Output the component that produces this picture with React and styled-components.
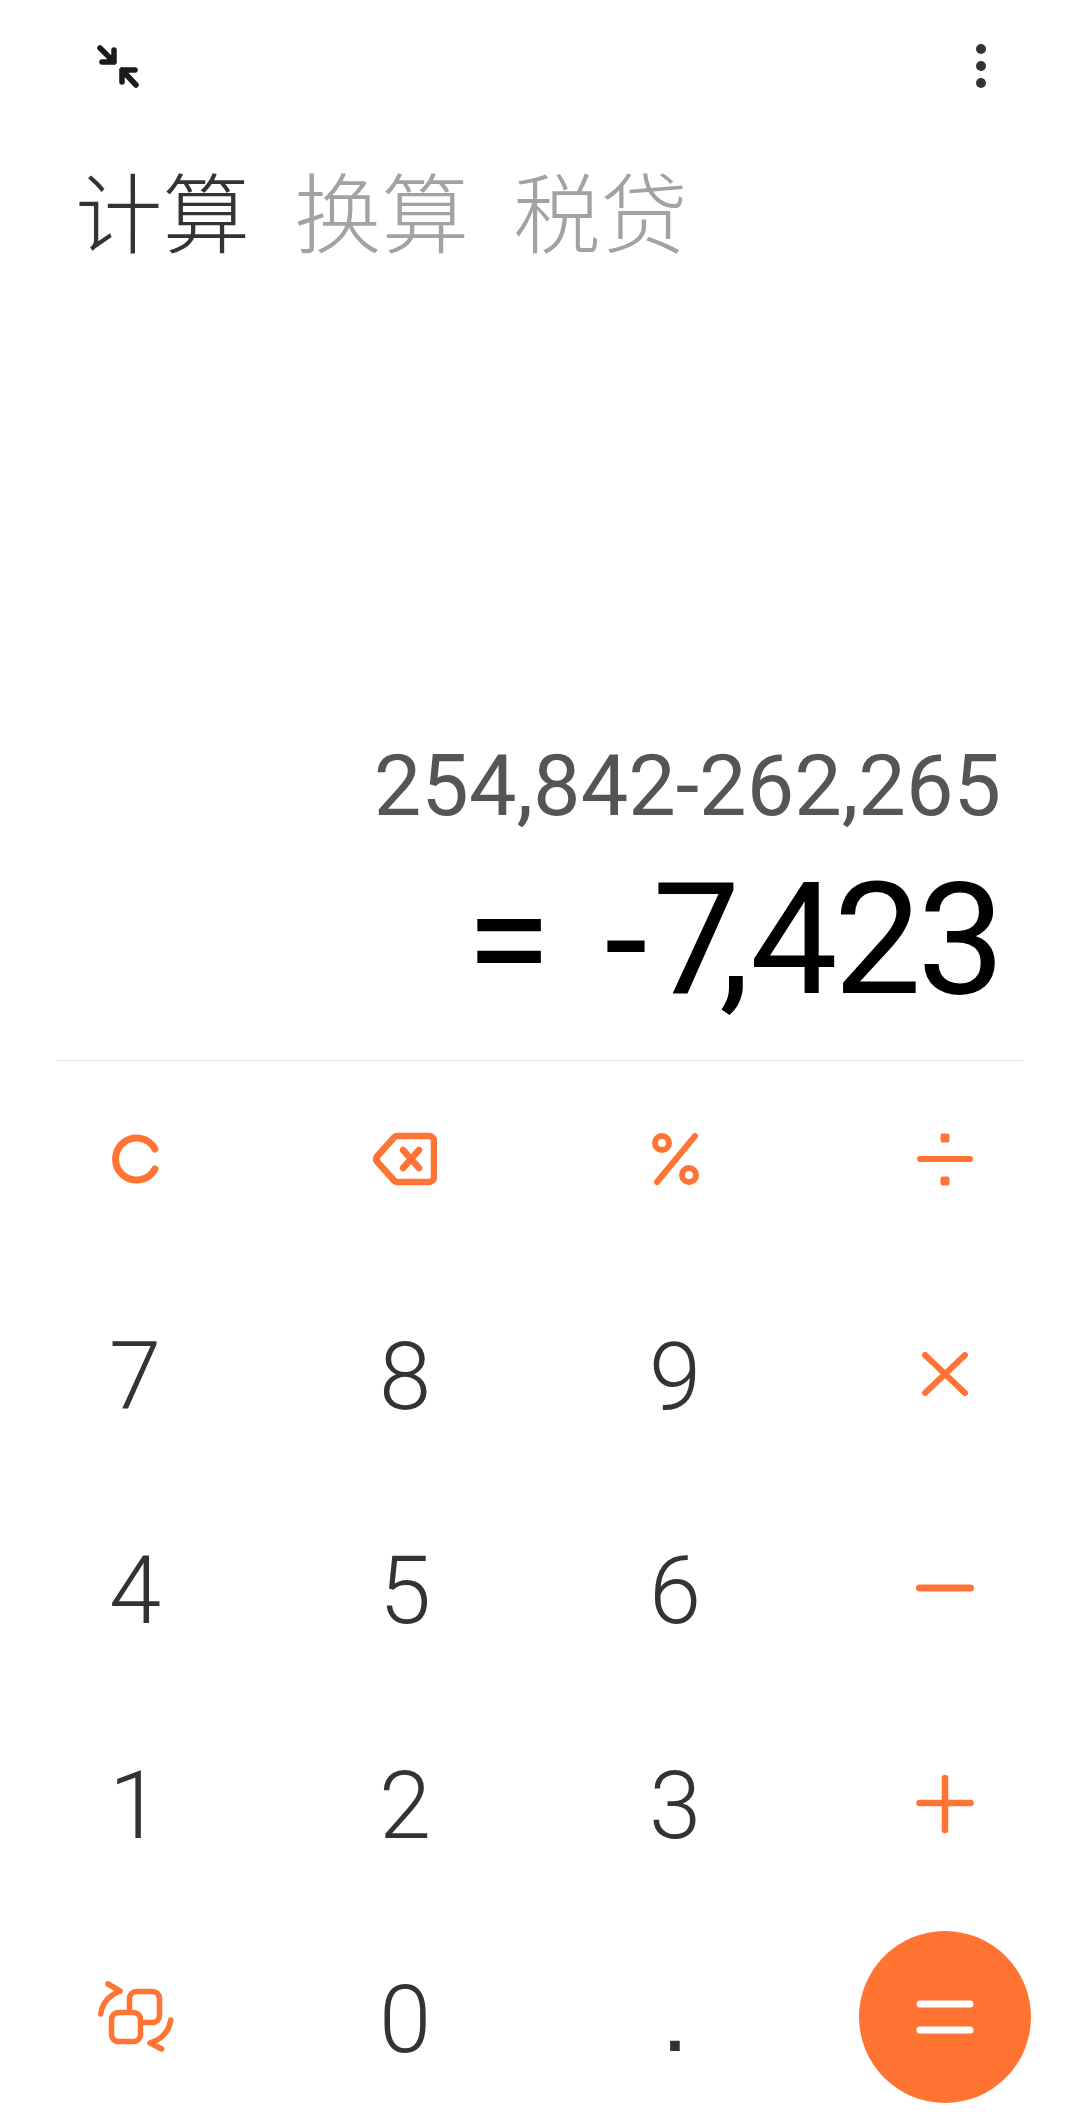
import React from "react";
import styled, { createGlobalStyle } from "styled-components";

const orange = "#ff7433";

const Global = createGlobalStyle`
  html, body { margin: 0; padding: 0; background: #fff; }
  body { width: 1080px; height: 2120px; overflow: hidden; }
`;

const Page = styled.div`
  width: 1080px;
  height: 2120px;
  display: flex;
  flex-direction: column;
  overflow: hidden;
  background: #fff;
  font-family: Roboto, "Liberation Sans", sans-serif;
`;

const Toolbar = styled.div`
  height: 132px;
  flex: none;
  display: flex;
  align-items: center;
  justify-content: space-between;
  padding: 0 89px 0 93px;
`;

const Tabs = styled.div`
  flex: none;
  display: flex;
  gap: 44px;
  margin-top: 33px;
  padding-left: 75px;
`;

const Tab = styled.span`
  font-family: "Noto Sans CJK SC", sans-serif;
  font-weight: 300;
  font-size: 87.5px;
  line-height: 88px;
  color: ${(p) => (p.$active ? "#333" : "#a2a2a2")};
`;

const Display = styled.div`
  flex: 1;
  display: flex;
  flex-direction: column;
  align-items: flex-end;
  justify-content: flex-end;
  padding: 0 79px 30px 0;
`;

const Expression = styled.div`
  font-size: 84.6px;
  line-height: 100px;
  font-weight: 400;
  color: #555;
  margin-bottom: 13px;
`;

const Result = styled.div`
  display: flex;
  align-items: baseline;
  font-size: 156px;
  line-height: 180px;
  font-weight: 400;
  color: #000;
  letter-spacing: -4px;
`;

const ResultEq = styled.span`
  margin-right: 57px;
`;

const Minus = styled.span`
  margin-right: 9px;
`;

const Comma = styled.span`
  margin: 0 4px 0 -17px;
`;

const Divider = styled.div`
  flex: none;
  height: 1px;
  margin: 0 57px;
  background: #e2e2e2;
`;

const Keypad = styled.div`
  flex: none;
  display: grid;
  grid-template-columns: repeat(4, 270px);
  grid-auto-rows: 214.5px;
  margin-top: -9px;
  height: 1068px;
`;

const Key = styled.div`
  display: flex;
  align-items: center;
  justify-content: center;
`;

const Digit = styled.span`
  padding-top: 6px;
  font-size: 94px;
  line-height: 1;
  font-weight: 300;
  color: #333;
`;

const Point = styled.span`
  padding-top: 19px;
  font-family: "Liberation Sans", sans-serif;
  font-size: 68px;
  line-height: 1;
  font-weight: 700;
  color: #333;
`;

const EqualsCircle = styled.div`
  width: 172px;
  height: 172px;
  border-radius: 50%;
  background: ${orange};
  display: flex;
  align-items: center;
  justify-content: center;
`;

const Icon = styled.svg`
  display: block;
  flex: none;
  fill: none;
  stroke: ${(p) => p.$color || orange};
  stroke-width: ${(p) => p.$w || 6}px;
  stroke-linecap: round;
  stroke-linejoin: round;
`;

const Kebab = styled.svg`
  display: block;
  flex: none;
  fill: #333;
`;

const box = { width: 64, height: 64, viewBox: "0 0 64 64" };

const keys = [
  <Icon {...box} $w={7}><path d="M52 22A21 21 0 1 0 52 42" /></Icon>,
  <Icon {...box} $w={6.5}><path d="M24 9H56a5 5 0 0 1 5 5V50a5 5 0 0 1-5 5H24a4 4 0 0 1-3-1.5L4 34.5a4 4 0 0 1 0-5L21 10.5a4 4 0 0 1 3-1.5Z M30 23L46 41M46 23L30 41" /></Icon>,
  <Icon {...box} $w={6}><circle cx="19" cy="16" r="7" /><circle cx="46" cy="48" r="7" /><path d="M52 9L14 55" /></Icon>,
  <Icon {...box}><path d="M7 32H57" /><rect x="29.5" y="8.5" width="5" height="5" fill={orange} strokeWidth="4" /><rect x="29.5" y="51.5" width="5" height="5" fill={orange} strokeWidth="4" /></Icon>,
  "7", "8", "9",
  <Icon {...box} $w={6}><path d="M12 13L52 51M52 13L12 51" /></Icon>,
  "4", "5", "6",
  <Icon {...box} $w={7}><path d="M6.5 32H57.5" /></Icon>,
  "1", "2", "3",
  <Icon {...box} $w={6.5}><path d="M6.5 32H57.5M32 7V59" /></Icon>,
  <Icon width={80} height={80} viewBox="0 0 80 80" $w={5.5}>
    <rect x="34.5" y="14.5" width="30" height="31" rx="7" />
    <rect x="16.5" y="35.5" width="29" height="29" rx="7" fill="#fff" />
    <path d="M5.7 37C7 27 13 19 25 14M13 7L25 14M75.7 43C74 54 68 62 55 66M55 66L66.7 72" />
  </Icon>,
  "0",
  <Point>.</Point>,
  <EqualsCircle>
    <Icon {...box} $color="#fff" $w={7}><path d="M7 19H57M7 45H57" /></Icon>
  </EqualsCircle>,
];

export default function App() {
  return (
    <Page>
      <Global />
      <Toolbar>
        <Icon width={50} height={50} viewBox="0 0 50 50" $color="#1a1a1a" $w={5.5}>
          <path d="M7 7L21 21M9 21H21V9M29 29L43 44M29 41V29H42" />
        </Icon>
        <Kebab width={20} height={50} viewBox="0 0 20 50">
          <circle cx="10" cy="8" r="5" />
          <circle cx="10" cy="25" r="5" />
          <circle cx="10" cy="42" r="5" />
        </Kebab>
      </Toolbar>
      <Tabs>
        <Tab $active>计算</Tab>
        <Tab>换算</Tab>
        <Tab>税贷</Tab>
      </Tabs>
      <Display>
        <Expression>254,842-262,265</Expression>
        <Result>
          <ResultEq>=</ResultEq>
          <Minus>-</Minus>
          <span>7</span>
          <Comma>,</Comma>
          <span>423</span>
        </Result>
      </Display>
      <Divider />
      <Keypad>
        {keys.map((k, i) => (
          <Key key={i}>{typeof k === "string" ? <Digit>{k}</Digit> : k}</Key>
        ))}
      </Keypad>
    </Page>
  );
}
